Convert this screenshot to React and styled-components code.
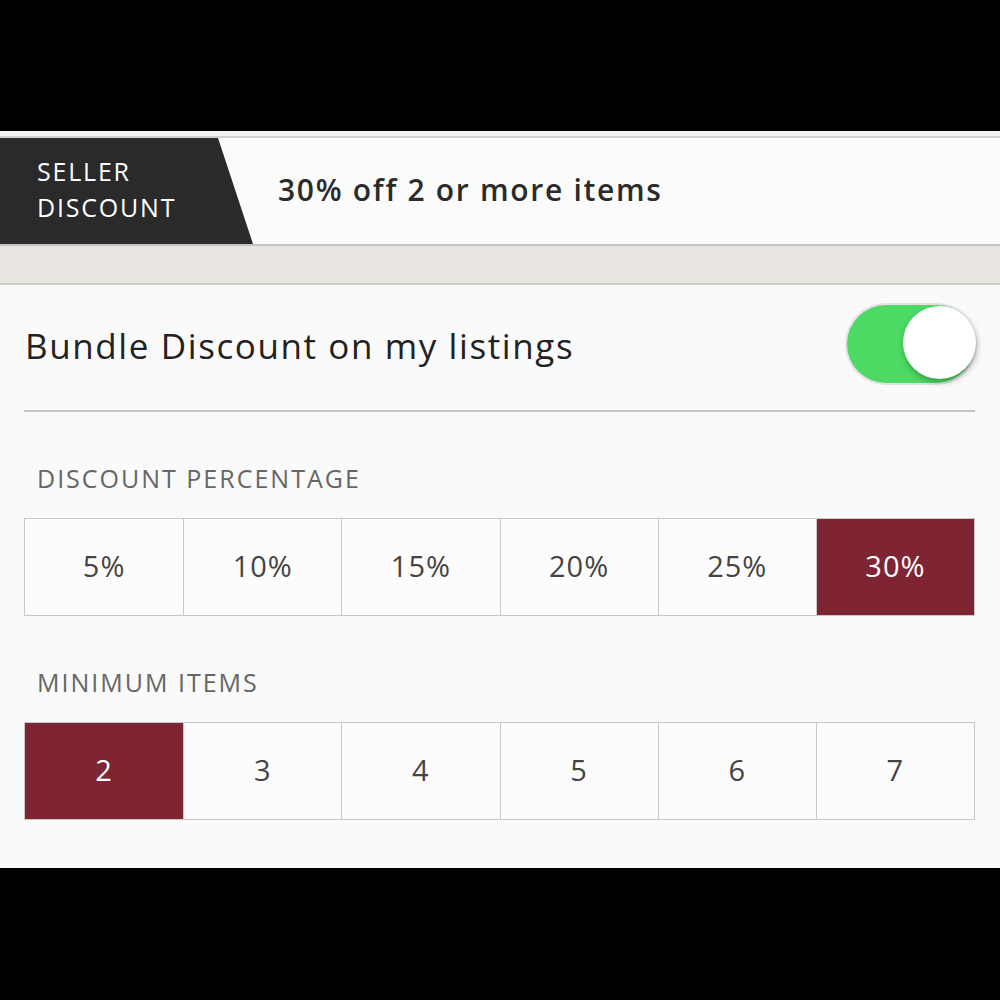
import React from "react";
import styled, { createGlobalStyle } from "styled-components";

const GlobalStyle = createGlobalStyle`
  html, body {
    margin: 0;
    padding: 0;
    background: #000;
  }
  body {
    font-family: "Open Sans", "Lato", sans-serif;
  }
`;

const percentages = ["5%", "10%", "15%", "20%", "25%", "30%"];
const minimums = ["2", "3", "4", "5", "6", "7"];

export default function App() {
  return (
    <>
      <GlobalStyle />
      <Screen>
        <Panel>
          <Header>
            <Tag>
              <TagText>
                SELLER
                <br />
                DISCOUNT
              </TagText>
            </Tag>
            <Summary>30% off 2 or more items</Summary>
          </Header>
          <Band />
          <Content>
            <ToggleRow>
              <RowTitle>Bundle Discount on my listings</RowTitle>
              <Switch $on>
                <Knob />
              </Switch>
            </ToggleRow>
            <Section>
              <Label>DISCOUNT PERCENTAGE</Label>
              <Segments>
                {percentages.map((p) => (
                  <Segment key={p} $active={p === "30%"}>
                    {p}
                  </Segment>
                ))}
              </Segments>
            </Section>
            <Section>
              <Label>MINIMUM ITEMS</Label>
              <Segments>
                {minimums.map((m) => (
                  <Segment key={m} $active={m === "2"}>
                    {m}
                  </Segment>
                ))}
              </Segments>
            </Section>
          </Content>
        </Panel>
      </Screen>
    </>
  );
}

const Screen = styled.div`
  width: 1000px;
  height: 1000px;
  background: #000;
  padding-top: 131px;
  box-sizing: border-box;
`;

const Panel = styled.div`
  height: 737px;
  background: #fafafa;
  border-top: 5px solid #f2f2f2;
  display: flex;
  flex-direction: column;
  box-sizing: border-box;
`;

const Header = styled.div`
  display: flex;
  align-items: stretch;
  height: 110px;
  background: #fbfbfb;
  border-top: 2px solid #d0d0d0;
  border-bottom: 2px solid #c4c4c4;
  box-sizing: border-box;
`;

const Tag = styled.div`
  width: 253px;
  background: #2a2a2a;
  clip-path: polygon(0 0, 218px 0, 253px 100%, 0 100%);
  display: flex;
  align-items: center;
  padding-left: 37px;
  box-sizing: border-box;
`;

const TagText = styled.div`
  color: #fff;
  font-size: 25px;
  line-height: 36px;
  letter-spacing: 1.8px;
  margin-top: -4px;
`;

const Summary = styled.div`
  display: flex;
  align-items: center;
  padding-left: 25px;
  font-size: 30px;
  font-weight: 600;
  letter-spacing: 1.7px;
  color: #2b2b2b;
  margin-top: -4px;
`;

const Band = styled.div`
  height: 37px;
  background: #e8e5e0;
  border-bottom: 2px solid #cfcdca;
`;

const Content = styled.div`
  flex: 1;
  padding: 0 25px 0 24px;
  background: #fafafa;
`;

const ToggleRow = styled.div`
  display: flex;
  align-items: center;
  justify-content: space-between;
  height: 127px;
  border-bottom: 2px solid #c6c6c6;
  box-sizing: border-box;
`;

const RowTitle = styled.div`
  font-size: 35px;
  color: #222;
  letter-spacing: 1.6px;
  padding-left: 1px;
  margin-top: -4px;
`;

const Switch = styled.div`
  position: relative;
  width: 128px;
  height: 78px;
  border-radius: 39px;
  background: ${({ $on }) => ($on ? "#4cd964" : "#e5e5e5")};
  box-shadow: 0 0 0 2px #e2e2e2;
  margin-top: -8px;
`;

const Knob = styled.div`
  position: absolute;
  right: -1px;
  top: 1px;
  width: 73px;
  height: 73px;
  border-radius: 50%;
  background: #fff;
  box-shadow: 1px 3px 6px rgba(0, 0, 0, 0.3);
`;

const Section = styled.div`
  display: flex;
  flex-direction: column;
`;

const Label = styled.div`
  font-size: 25px;
  line-height: 30px;
  color: #666;
  letter-spacing: 2px;
  padding-left: 13px;
  height: 106px;
  display: flex;
  align-items: flex-end;
  padding-bottom: 25px;
  box-sizing: border-box;
`;

const Segments = styled.div`
  display: grid;
  grid-template-columns: repeat(6, 1fr);
  border: 1px solid #c8c8c8;
  height: 98px;
  box-sizing: border-box;
  background: #fcfcfc;
`;

const Segment = styled.div`
  display: flex;
  align-items: center;
  justify-content: center;
  font-size: 29px;
  letter-spacing: 1px;
  padding-bottom: 4px;
  color: ${({ $active }) => ($active ? "#fff" : "#444")};
  background: ${({ $active }) => ($active ? "#7f2432" : "transparent")};
  border-left: 1px solid #c8c8c8;
  &:first-child {
    border-left: none;
  }
`;
